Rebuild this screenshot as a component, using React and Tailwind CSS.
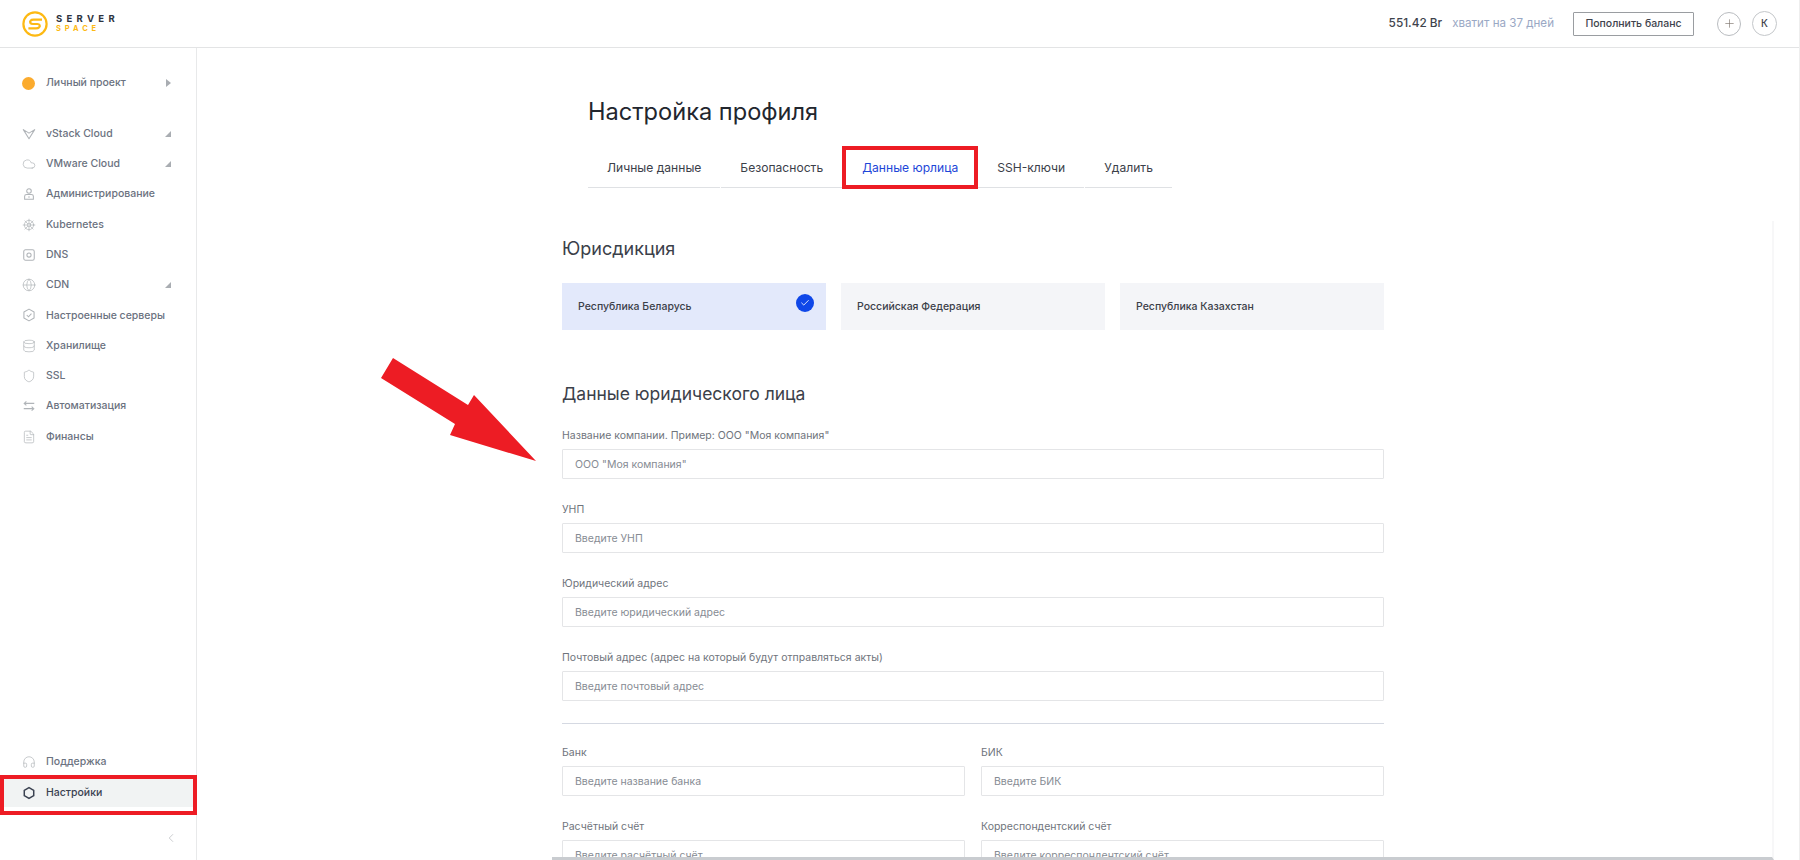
import { Cloud, ShipWheel, Globe, Database, Shield, FileText, Headphones, ChevronLeft, Plus, Check } from "lucide-react";

const VStackIcon = (props) => (
  <svg viewBox="0 0 16 16" fill="none" stroke="currentColor" strokeWidth="1.1" {...props}>
    <path d="M1.5 3 L8 13.5 L14.5 3 L8 7 Z" strokeLinejoin="round" />
  </svg>
);

const DnsIcon = (props) => (
  <svg viewBox="0 0 16 16" fill="none" stroke="currentColor" strokeWidth="1.1" {...props}>
    <rect x="2" y="2" width="12" height="12" rx="2" />
    <circle cx="8" cy="8" r="2.4" />
  </svg>
);

const SwapIcon = (props) => (
  <svg viewBox="0 0 16 16" fill="none" stroke="currentColor" strokeWidth="1.1" {...props}>
    <path d="M14 5 H2.5 M5 2.8 L2.5 5 L5 7.2" />
    <path d="M2 11 H13.5 M11 8.8 L13.5 11 L11 13.2" />
  </svg>
);

const AdminIcon = (props) => (
  <svg viewBox="0 0 16 16" fill="none" stroke="currentColor" strokeWidth="1.1" {...props}>
    <circle cx="8" cy="4.5" r="2.6" />
    <path d="M3 14 V10.5 C3 9.2 4 8.6 5.4 8.6 H10.6 C12 8.6 13 9.2 13 10.5 V14 Z" />
    <path d="M8 10.6 V12.2" />
  </svg>
);

const HexCheckIcon = (props) => (
  <svg viewBox="0 0 16 16" fill="none" stroke="currentColor" strokeWidth="1.1" {...props}>
    <path d="M8 1.3 L13.8 4.6 V11.4 L8 14.7 L2.2 11.4 V4.6 Z" strokeLinejoin="round" />
    <path d="M5.4 8 L7.4 10 L10.8 6.4" />
  </svg>
);

const SettingsIcon = (props) => (
  <svg viewBox="0 0 16 16" fill="none" stroke="currentColor" strokeWidth="1.7" {...props}>
    <path d="M8 1.8 L13.4 4.9 V11.1 L8 14.2 L2.6 11.1 V4.9 Z" strokeLinejoin="round" />
  </svg>
);

const navItems = [
  { label: "vStack Cloud", icon: VStackIcon, corner: true },
  { label: "VMware Cloud", icon: Cloud, corner: true },
  { label: "Администрирование", icon: AdminIcon },
  { label: "Kubernetes", icon: ShipWheel },
  { label: "DNS", icon: DnsIcon },
  { label: "CDN", icon: Globe, corner: true },
  { label: "Настроенные серверы", icon: HexCheckIcon },
  { label: "Хранилище", icon: Database },
  { label: "SSL", icon: Shield },
  { label: "Автоматизация", icon: SwapIcon },
  { label: "Финансы", icon: FileText },
];

const tabs = ["Личные данные", "Безопасность", "Данные юрлица", "SSH-ключи", "Удалить"];

function Logo() {
  return (
    <div className="flex items-center gap-[8px]">
      <svg viewBox="0 0 26 26" className="w-[26px] h-[26px]" fill="none" stroke="#fdb913" strokeWidth="2.2">
        <circle cx="13" cy="13" r="11.6" />
        <path d="M20 8.6 H11.5 C8.8 8.6 7.4 10.4 8.4 12 C9 12.8 10 13 11 13 H15.4 C17.8 13 18.4 15 17.2 16.2 C16.4 17.1 15.2 17.4 14 17.4 H6.4" strokeLinejoin="round" />
      </svg>
      <div className="flex flex-col">
        <span className="text-[9.5px] leading-[11px] font-bold tracking-[4.3px] text-[#2e3440]">SERVER</span>
        <span className="text-[7.5px] leading-[10px] font-bold tracking-[3.9px] text-[#fdb913]">SPACE</span>
      </div>
    </div>
  );
}

function Corner() {
  return (
    <svg viewBox="0 0 6 6" className="w-[6px] h-[6px] text-[#a9adb2]" fill="currentColor">
      <polygon points="6,0 6,6 0,6" />
    </svg>
  );
}

function NavItem({ item }) {
  const Icon = item.icon;
  return (
    <div className="flex items-center h-[30.3px] pl-[22px] pr-[25px]">
      <Icon className="w-[14px] h-[14px] text-[#b0b4b8] shrink-0" strokeWidth={1.2} />
      <span className="ml-[10px] flex-1 text-[10.5px] font-medium text-[#6b7280]">{item.label}</span>
      {item.corner && <Corner />}
    </div>
  );
}

function Field({ label, placeholder }) {
  return (
    <div className="flex flex-col flex-1 min-w-0">
      <label className="text-[10.5px] leading-[14px] text-[#6f747c] mb-[6px]">{label}</label>
      <input
        placeholder={placeholder}
        className="h-[30px] shrink-0 w-full bg-white border border-[#e4e5e7] rounded-[1px] px-[12px] text-[10.5px] outline-none placeholder:text-[#868b93]"
      />
    </div>
  );
}

function JurisdictionCard({ label, active }) {
  return (
    <div className={`relative flex-1 h-[47px] flex items-center pl-[16px] text-[10.5px] font-medium text-[#3b4049] ${active ? "bg-[#e3e9fb]" : "bg-[#f4f5f8]"}`}>
      {label}
      {active && (
        <span className="absolute right-[12px] top-[11px] w-[18px] h-[18px] rounded-full bg-[#0f47e8] flex items-center justify-center">
          <Check className="w-[10px] h-[10px] text-white" strokeWidth={2} />
        </span>
      )}
    </div>
  );
}

export default function App() {
  return (
    <div className="relative h-screen flex flex-col overflow-hidden bg-white border-r border-[#eeeeee] font-['Inter',sans-serif]">
      {/* Top bar */}
      <header className="h-[48px] shrink-0 flex items-center justify-between border-b border-[#e3e4e5] pl-[22px] pr-[22px]">
        <Logo />
        <div className="flex items-center">
          <span className="text-[11.8px] font-medium text-[#3e434c]">551.42 Br</span>
          <span className="ml-[10px] text-[11.6px] text-[#9aa8c4]">хватит на 37 дней</span>
          <button className="ml-[19px] w-[121px] h-[24px] border border-[#9a9da1] rounded-[1px] text-[10.5px] font-medium text-[#3e434c]">
            Пополнить баланс
          </button>
          <span className="ml-[23px] w-[24px] h-[24px] rounded-full border border-[#b9bcc0] flex items-center justify-center">
            <Plus className="w-[13px] h-[13px] text-[#7d746c]" strokeWidth={1.2} />
          </span>
          <span className="ml-[11px] w-[25px] h-[25px] rounded-full border border-[#c4c7ca] flex items-center justify-center text-[10px] font-medium text-[#3e434c]">
            К
          </span>
        </div>
      </header>

      <div className="flex flex-1 min-h-0">
        {/* Sidebar */}
        <aside className="w-[197px] shrink-0 flex flex-col border-r border-[#e8e9ea]">
          <div className="flex items-center h-[30px] mt-[20px] mb-[20.5px] pl-[22px] pr-[25px]">
            <span className="w-[13px] h-[13px] rounded-full bg-[#fbab2e]" />
            <span className="ml-[11px] flex-1 text-[10.5px] font-medium text-[#6b7280]">Личный проект</span>
            <svg viewBox="0 0 5 8" className="w-[5px] h-[8px]" fill="#a9adb2">
              <polygon points="0,0 5,4 0,8" />
            </svg>
          </div>
          {navItems.map((item) => (
            <NavItem key={item.label} item={item} />
          ))}

          <div className="mt-auto">
            <div className="flex items-center h-[26px] pl-[22px]">
              <Headphones className="w-[14px] h-[14px] text-[#b0b4b8]" strokeWidth={1.2} />
              <span className="ml-[10px] text-[10.5px] font-medium text-[#6b7280]">Поддержка</span>
            </div>
            <div className="mr-[-1px] h-[40px] border-[4px] border-[#ed1c24]">
              <div className="h-[28px] bg-[#f1f3f3] flex items-center pl-[18px]">
                <SettingsIcon className="w-[14px] h-[14px] text-[#3a4150]" />
                <span className="ml-[10px] text-[10.5px] font-medium text-[#3a4150]">Настройки</span>
              </div>
            </div>
            <div className="h-[45px] flex items-center justify-end pr-[18px]">
              <ChevronLeft className="w-[14px] h-[14px] text-[#b4b8bc]" strokeWidth={1.2} />
            </div>
          </div>
        </aside>

        {/* Main */}
        <main className="flex-1 min-w-0 flex flex-col pl-[355px] pr-[25px]">
          <div className="pl-[36px] shrink-0">
            <h1 className="mt-[48px] text-[23.6px] leading-[32px] font-normal text-[#22262e]">Настройка профиля</h1>
            <nav className="mt-[20px] flex gap-[1px] h-[40px]">
              {tabs.map((t) => (
                <div key={t} className={`relative flex items-center px-[19px] pt-[2px] whitespace-nowrap border-b border-[#dfe1e4] text-[12.1px] ${t === "Данные юрлица" ? "text-[#1d46d8]" : "text-[#3b4049]"}`}>
                  {t}
                  {t === "Данные юрлица" && (
                    <span className="absolute inset-x-[-1px] top-[-2px] bottom-[-2px] border-[4px] border-[#ed1c24]" />
                  )}
                </div>
              ))}
            </nav>
          </div>

          <section className="mt-[33px] flex-1 min-h-0 overflow-hidden pl-[10px] border-r-[2px] border-b-[3px] border-r-[#f7f7f8] border-b-[#c9ccd0]">
            <div className="w-[822px]">
              <h2 className="mt-[16px] text-[18px] leading-[24px] font-normal text-[#3b4049]">Юрисдикция</h2>
              <div className="mt-[22px] flex gap-[15px]">
                <JurisdictionCard label="Республика Беларусь" active />
                <JurisdictionCard label="Российская Федерация" />
                <JurisdictionCard label="Республика Казахстан" />
              </div>

              <h2 className="mt-[52px] text-[17.5px] leading-[24px] font-normal text-[#3b4049]">Данные юридического лица</h2>
              <div className="mt-[23px] flex flex-col gap-[24px]">
                <Field label='Название компании. Пример: ООО "Моя компания"' placeholder='ООО "Моя компания"' />
                <Field label="УНП" placeholder="Введите УНП" />
                <Field label="Юридический адрес" placeholder="Введите юридический адрес" />
                <Field label="Почтовый адрес (адрес на который будут отправляться акты)" placeholder="Введите почтовый адрес" />
              </div>
              <div className="mt-[22px] mb-[22px] border-t border-[#d5d9e2]" />
              <div className="flex flex-col gap-[24px]">
                <div className="flex gap-[16px]">
                  <Field label="Банк" placeholder="Введите название банка" />
                  <Field label="БИК" placeholder="Введите БИК" />
                </div>
                <div className="flex gap-[16px]">
                  <Field label="Расчётный счёт" placeholder="Введите расчётный счёт" />
                  <Field label="Корреспондентский счёт" placeholder="Введите корреспондентский счёт" />
                </div>
              </div>
            </div>
          </section>
        </main>
      </div>

      {/* Annotation arrow */}
      <svg className="absolute left-[370px] top-[350px] w-[180px] h-[120px] pointer-events-none" viewBox="370 350 180 120">
        <polygon fill="#ed1c24" points="393,358 381,378 455,424 450,435 536,461 474,395 468,405" />
      </svg>
    </div>
  );
}
